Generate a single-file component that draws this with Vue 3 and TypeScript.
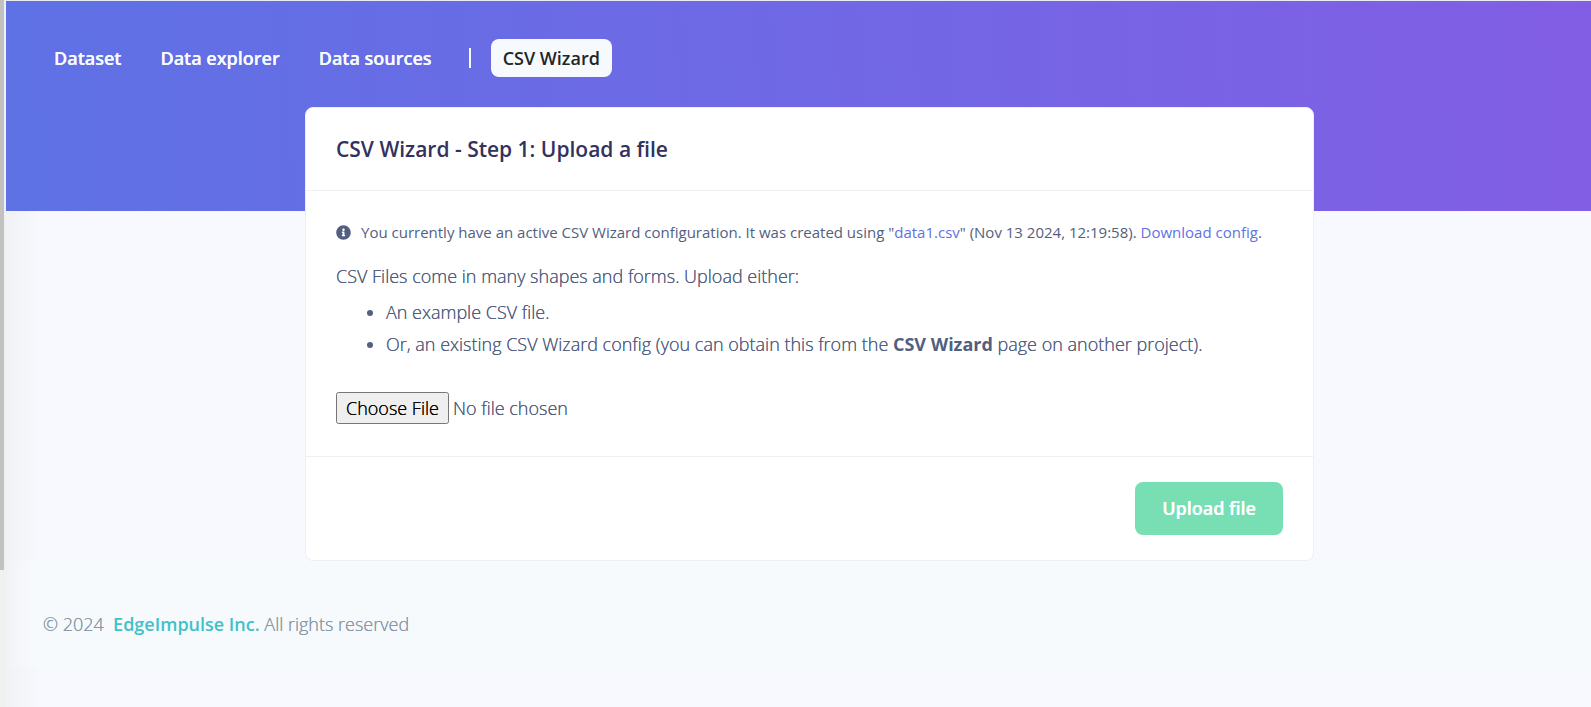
<script setup lang="ts">
import { ref } from 'vue'

interface NavItem {
  label: string
}

const navItems: NavItem[] = [
  { label: 'Dataset' },
  { label: 'Data explorer' },
  { label: 'Data sources' },
]

const hasFile = ref(false)

function onFileChange(event: Event) {
  const input = event.target as HTMLInputElement
  hasFile.value = !!input.files && input.files.length > 0
}
</script>

<template>
  <div class="app">
    <aside class="rail" aria-hidden="true"><div class="rail-thumb"></div></aside>
    <div class="page">
      <header class="hero">
        <nav class="tabs" aria-label="Data acquisition">
          <a v-for="item in navItems" :key="item.label" class="tab" href="#">{{ item.label }}</a>
          <span class="divider" aria-hidden="true"></span>
          <a class="tab active" href="#" aria-current="page">CSV Wizard</a>
        </nav>
      </header>
      <main class="content">
        <form class="card" @submit.prevent>
          <div class="card-head">
            <h1>CSV Wizard - Step 1: Upload a file</h1>
          </div>
          <div class="card-body">
            <p class="notice">
              <svg class="info" viewBox="0 0 512 512" aria-hidden="true">
                <path fill="currentColor" d="M256 8C119 8 8 119 8 256s111 248 248 248 248-111 248-248S393 8 256 8zm0 110c23.200 0 42 18.800 42 42s-18.800 42-42 42-42-18.800-42-42 18.800-42 42-42zm56 254c0 6.600-5.400 12-12 12h-88c-6.600 0-12-5.400-12-12v-24c0-6.600 5.400-12 12-12h12v-64h-12c-6.600 0-12-5.400-12-12v-24c0-6.600 5.400-12 12-12h64c6.600 0 12 5.400 12 12v100h12c6.600 0 12 5.400 12 12v24z" />
              </svg>
              <span>You currently have an active CSV Wizard configuration. It was created using "<a href="#">data1.csv</a>" (Nov 13 2024, 12:19:58). <a href="#">Download config</a>.</span>
            </p>
            <p class="intro">CSV Files come in many shapes and forms. Upload either:</p>
            <ul class="options">
              <li>An example CSV file.</li>
              <li>Or, an existing CSV Wizard config (you can obtain this from the <strong>CSV Wizard</strong> page on another project).</li>
            </ul>
            <input class="file" type="file" aria-label="CSV or config file" @change="onFileChange" />
          </div>
          <div class="card-foot">
            <button class="upload" type="submit" :disabled="!hasFile">Upload file</button>
          </div>
        </form>
      </main>
      <footer class="footer">
        © 2024&nbsp; <a href="#">EdgeImpulse Inc.</a> All rights reserved
      </footer>
    </div>
  </div>
</template>

<style>
body {
  background: #f8f9fe;
}
</style>

<style scoped>
.app {
  display: flex;
  min-height: 100vh;
  font-family: "Open Sans", "Noto Sans", sans-serif;
  font-size: 18px;
  font-weight: 300;
  line-height: 28px;
  color: #525f7f;
}

.rail {
  flex: none;
  width: 4px;
  background: #f1f1f1;
}

.rail-thumb {
  height: 570px;
  background: #c1c1c1;
}

.page {
  flex: 1;
  border-top: 1px solid #e9ecef;
  border-left: 2px solid #f1f1f3;
  background: linear-gradient(90deg, #f1f2f5, #f8f9fe 38px);
}

.hero {
  height: 210px;
  background: linear-gradient(87deg, #5e72e4 0, #825ee4 100%);
}

.tabs {
  display: flex;
  align-items: center;
  padding: 38px 37px 0;
}

.tab {
  padding: 5px 11px;
  margin-right: 17px;
  border-radius: 8px;
  color: #f7fafc;
  font-weight: 600;
  text-decoration: none;
  text-shadow: 0 0 0 currentColor;
}

.tab.active {
  padding: 5px 12px;
  background: #f7fafc;
  color: #212529;
  text-shadow: none;
}

.divider {
  width: 2px;
  height: 20px;
  margin: 0 20px 0 9px;
  background: #f7fafc;
}

.content {
  margin-top: -104px;
  padding: 0 15px 0 37px;
}

.card {
  max-width: 1009px;
  box-sizing: border-box;
  margin: 0 auto;
  border: 1px solid #eeeff2;
  border-radius: 8px;
  background: #fff;
}

.card-head {
  padding: 25px 30px;
  border-bottom: 1px solid #f0f0f2;
}

h1 {
  margin: 0;
  color: #32325d;
  font-size: 21px;
  font-weight: 600;
  line-height: 32px;
}

.card-body {
  padding: 29px 30px 32px;
}

p {
  margin: 0;
}

.notice {
  display: flex;
  align-items: center;
  gap: 10px;
  margin-bottom: 16px;
  font-size: 15px;
  font-weight: 400;
  line-height: 24px;
}

.info {
  width: 15px;
  height: 15px;
}

.notice a {
  color: #5e72e4;
  text-decoration: none;
}

.intro,
.options,
.file,
.footer {
  text-shadow: 0 0 0 currentColor;
}

.intro {
  line-height: 32px;
}

.options {
  margin: 4px 0 32px;
  padding-left: 50px;
  line-height: 32px;
}

strong {
  font-weight: 700;
  text-shadow: none;
}

.file {
  display: block;
  width: 100%;
  color: inherit;
  font: inherit;
}

.file::file-selector-button {
  padding: 2px 8px;
  font: inherit;
  text-shadow: 0 0 0 currentColor;
}

.card-foot {
  display: flex;
  justify-content: flex-end;
  padding: 25px 30px;
  border-top: 1px solid #f0f0f2;
}

.upload {
  padding: 12px 27px;
  border: 0;
  border-radius: 8px;
  background: #77dfb3;
  color: #fff;
  font: inherit;
  font-weight: 600;
  line-height: 29px;
  text-shadow: 0 0 0 currentColor;
}

.footer {
  padding: 49px 37px 29px;
  background: linear-gradient(90deg, #f1f2f500, #f7fafc 38px);
  color: #8898aa;
}

.footer a {
  color: #3fc1c9;
  font-weight: 600;
  text-decoration: none;
  text-shadow: none;
}
</style>
